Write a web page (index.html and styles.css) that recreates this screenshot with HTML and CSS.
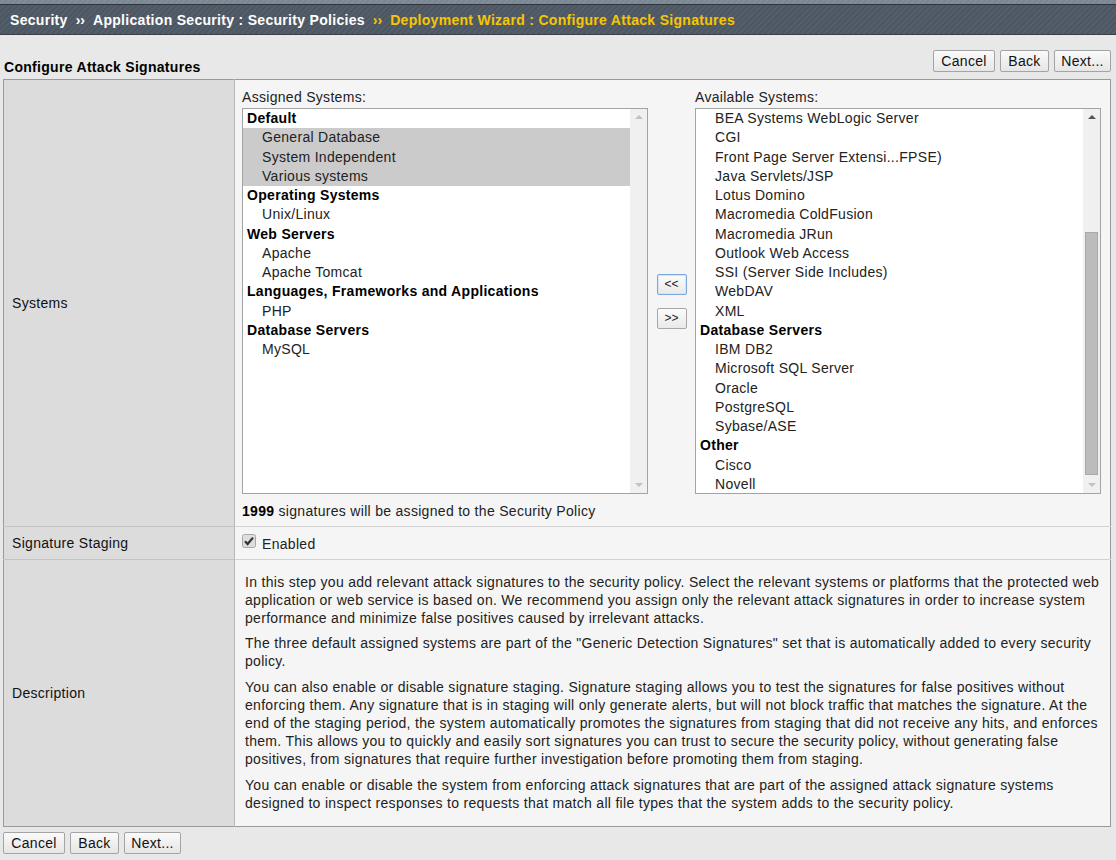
FILE: index.html
```html
<!DOCTYPE html>
<html>
<head>
<meta charset="utf-8">
<link rel="stylesheet" href="styles.css">
</head>
<body>
<div class="header">
  <div class="strip"></div>
  <div class="crumbs">
    <span>Security</span><span class="sep">&rsaquo;&rsaquo;</span><span>Application Security : Security Policies</span><span class="sep cur">&rsaquo;&rsaquo;</span><span class="cur">Deployment Wizard : Configure Attack Signatures</span>
  </div>
</div>

<div class="toolbar">
  <h1 class="title">Configure Attack Signatures</h1>
  <div class="btns">
    <button class="btn b-cancel">Cancel</button>
    <button class="btn b-back">Back</button>
    <button class="btn b-next">Next...</button>
  </div>
</div>

<table class="form">
  <tr class="r-systems">
    <th>Systems</th>
    <td>
      <div class="picker">
        <div class="pcol">
          <div class="plabel">Assigned Systems:</div>
          <div class="listbox">
            <div class="items">
              <div class="grp">Default</div>
              <div class="it sel">General Database</div>
              <div class="it sel">System Independent</div>
              <div class="it sel">Various systems</div>
              <div class="grp">Operating Systems</div>
              <div class="it">Unix/Linux</div>
              <div class="grp">Web Servers</div>
              <div class="it">Apache</div>
              <div class="it">Apache Tomcat</div>
              <div class="grp">Languages, Frameworks and Applications</div>
              <div class="it">PHP</div>
              <div class="grp">Database Servers</div>
              <div class="it">MySQL</div>
            </div>
            <div class="sbar">
              <span class="arr up off"></span>
              <span class="track"></span>
              <span class="arr down off"></span>
            </div>
          </div>
        </div>
        <div class="mid">
          <button class="mv focus">&lt;&lt;</button>
          <button class="mv">&gt;&gt;</button>
        </div>
        <div class="pcol">
          <div class="plabel">Available Systems:</div>
          <div class="listbox">
            <div class="items">
              <div class="it">BEA Systems WebLogic Server</div>
              <div class="it">CGI</div>
              <div class="it">Front Page Server Extensi...FPSE)</div>
              <div class="it">Java Servlets/JSP</div>
              <div class="it">Lotus Domino</div>
              <div class="it">Macromedia ColdFusion</div>
              <div class="it">Macromedia JRun</div>
              <div class="it">Outlook Web Access</div>
              <div class="it">SSI (Server Side Includes)</div>
              <div class="it">WebDAV</div>
              <div class="it">XML</div>
              <div class="grp">Database Servers</div>
              <div class="it">IBM DB2</div>
              <div class="it">Microsoft SQL Server</div>
              <div class="it">Oracle</div>
              <div class="it">PostgreSQL</div>
              <div class="it">Sybase/ASE</div>
              <div class="grp">Other</div>
              <div class="it">Cisco</div>
              <div class="it">Novell</div>
            </div>
            <div class="sbar">
              <span class="arr up"></span>
              <span class="track"><span class="thumb"></span></span>
              <span class="arr down off"></span>
            </div>
          </div>
        </div>
      </div>
      <div class="count"><b>1999</b> signatures will be assigned to the Security Policy</div>
    </td>
  </tr>
  <tr class="r-staging">
    <th>Signature Staging</th>
    <td class="stage">
      <label class="chk">
        <svg class="cbox" width="14" height="14" viewBox="0 0 14 14">
          <rect x="0.5" y="0.5" width="13" height="13" rx="2" fill="#dedede" stroke="#a8a8a8"/>
          <path d="M3 7.2 L5.6 10 L11 3.6" fill="none" stroke="#333" stroke-width="2.2"/>
        </svg>
        <span class="chklbl">Enabled</span>
      </label>
    </td>
  </tr>
  <tr class="r-desc">
    <th>Description</th>
    <td class="desc">
      <p>In this step you add relevant attack signatures to the security policy. Select the relevant systems or platforms that the protected web application or web service is based on. We recommend you assign only the relevant attack signatures in order to increase system performance and minimize false positives caused by irrelevant attacks.</p>
      <p>The three default assigned systems are part of the "Generic Detection Signatures" set that is automatically added to every security policy.</p>
      <p>You can also enable or disable signature staging. Signature staging allows you to test the signatures for false positives without enforcing them. Any signature that is in staging will only generate alerts, but will not block traffic that matches the signature. At the end of the staging period, the system automatically promotes the signatures from staging that did not receive any hits, and enforces them. This allows you to quickly and easily sort signatures you can trust to secure the security policy, without generating false positives, from signatures that require further investigation before promoting them from staging.</p>
      <p>You can enable or disable the system from enforcing attack signatures that are part of the assigned attack signature systems designed to inspect responses to requests that match all file types that the system adds to the security policy.</p>
    </td>
  </tr>
</table>

<div class="btns bottom">
  <button class="btn b-cancel">Cancel</button>
  <button class="btn b-back">Back</button>
  <button class="btn b-next">Next...</button>
</div>
</body>
</html>
```

FILE: styles.css
```css
html, body {
  margin: 0;
  padding: 0;
  background: #e8e8e8;
  font-family: "Liberation Sans", Arial, sans-serif;
  font-size: 14px;
  letter-spacing: 0.3px;
  color: #111;
}

.header .strip {
  height: 4px;
  background: repeating-linear-gradient(135deg, #7a8793 0 2px, #808d99 2px 4px);
}
.header .crumbs {
  height: 29px;
  border-top: 1px solid #2f353b;
  border-bottom: 1px solid #3a3f44;
  background: repeating-linear-gradient(135deg, #4d5763 0 2px, #535e6a 2px 4px);
  display: flex;
  align-items: center;
  padding-left: 10px;
  font-weight: bold;
  font-size: 14px;
  color: #fff;
  white-space: nowrap;
}
.header .sep {
  margin: 0 8px 0 8px;
  font-size: 14px;
  letter-spacing: 0;
}
.header .cur { color: #f7c600; }

.toolbar {
  display: flex;
  justify-content: space-between;
  height: 29px;
  margin-top: 15px;
  padding: 0 5px 0 4px;
}
.title {
  margin: 0;
  align-self: flex-end;
  font-size: 14px;
  line-height: 16px;
  margin-bottom: 4px;
  font-weight: bold;
  color: #000;
}
.btns {
  display: flex;
  gap: 5px;
  align-items: flex-start;
}
.btn {
  height: 22px;
  padding: 0;
  text-align: center;
  font-family: "Liberation Sans", Arial, sans-serif;
  font-size: 14px;
  letter-spacing: 0.3px;
  color: #111;
  background: linear-gradient(#fafafa, #e6e6e6);
  border: 1px solid #a4a4a4;
  border-radius: 2px;
}
.b-cancel { width: 62px; }
.b-back { width: 49px; }
.b-next { width: 57px; }
.btns.bottom {
  margin: 5px 0 0 3px;
}

.form {
  margin-left: 3px;
  width: 1108px;
  border-collapse: collapse;
  border: 1px solid #9a9a9a;
}
.form th {
  width: 222px;
  background: #dcdcdc;
  text-align: left;
  font-weight: normal;
  padding: 0 0 0 8px;
  vertical-align: middle;
  border-top: 1px solid #c4c4c4;
  border-right: 1px solid #b8b8b8;
  color: #111;
}
.form td {
  background: #f5f5f5;
  border-top: 1px solid #d2d2d2;
  vertical-align: top;
  padding: 0 0 0 7px;
}
.r-systems th, .r-systems td { border-top: none; }
.r-systems td { height: 447px; padding-top: 9px; box-sizing: border-box; }
.r-staging td, .r-staging th { height: 33px; box-sizing: border-box; }
.form td.stage { padding-top: 6px; }

.picker {
  display: flex;
}
.pcol {
  display: flex;
  flex-direction: column;
}
.plabel {
  line-height: 16px;
  margin-bottom: 3px;
  color: #222;
}
.listbox {
  width: 406px;
  height: 386px;
  box-sizing: border-box;
  border: 1px solid #a3a3a3;
  background: #fff;
  display: flex;
}
.items {
  flex: 1;
  overflow: hidden;
}
.items > div {
  height: 19.25px;
  line-height: 19.25px;
  white-space: nowrap;
}
.grp { font-weight: bold; padding-left: 4px; color: #000; }
.it { padding-left: 19px; color: #222; }
.it.sel { background: #cbcbcb; }

.sbar {
  width: 17px;
  background: #f0f0f0;
  display: flex;
  flex-direction: column;
  align-items: center;
}
.arr {
  height: 17px;
  width: 17px;
  position: relative;
}
.arr::after {
  content: "";
  position: absolute;
  left: 5px;
  width: 0;
  height: 0;
  border-left: 4px solid transparent;
  border-right: 4px solid transparent;
}
.arr.up::after { top: 6px; border-bottom: 4px solid #555; }
.arr.down::after { top: 7px; border-top: 4px solid #555; }
.arr.up.off::after { border-bottom-color: #c2c2c2; }
.arr.down.off::after { border-top-color: #c2c2c2; }
.track {
  flex: 1;
  width: 17px;
  display: flex;
  flex-direction: column;
  justify-content: flex-end;
  align-items: center;
}
.thumb {
  width: 13px;
  height: 243px;
  box-sizing: border-box;
  background: #bcbcbc;
  border: 1px solid #a9a9a9;
  margin-bottom: 1px;
}

.mid {
  width: 47px;
  display: flex;
  flex-direction: column;
  align-items: center;
  justify-content: center;
  gap: 13px;
  padding-top: 19px;
}
.mv {
  width: 30px;
  height: 21px;
  padding: 0;
  font-family: "Liberation Sans", Arial, sans-serif;
  font-size: 12px;
  color: #222;
  background: linear-gradient(#fbfbfb, #e9e9e9);
  border: 1px solid #a8a8a8;
  border-radius: 2px;
}
.mv.focus {
  border-color: #7ba7db;
  box-shadow: inset 0 0 0 1px #d6e6f7;
}

.count {
  margin-top: 9px;
  line-height: 16px;
  color: #222;
}
.count b { color: #000; }

.chk {
  display: flex;
  align-items: flex-start;
  gap: 6px;
  color: #222;
}
.cbox { margin-top: 1px; flex: none; }
.chklbl { line-height: 16px; margin-top: 3px; }

.form td.desc {
  padding: 5px 10px 7px 10px;
  font-size: 14px;
  line-height: 18px;
  color: #222;
}
.desc p { margin: 7.67px 0; }
```
